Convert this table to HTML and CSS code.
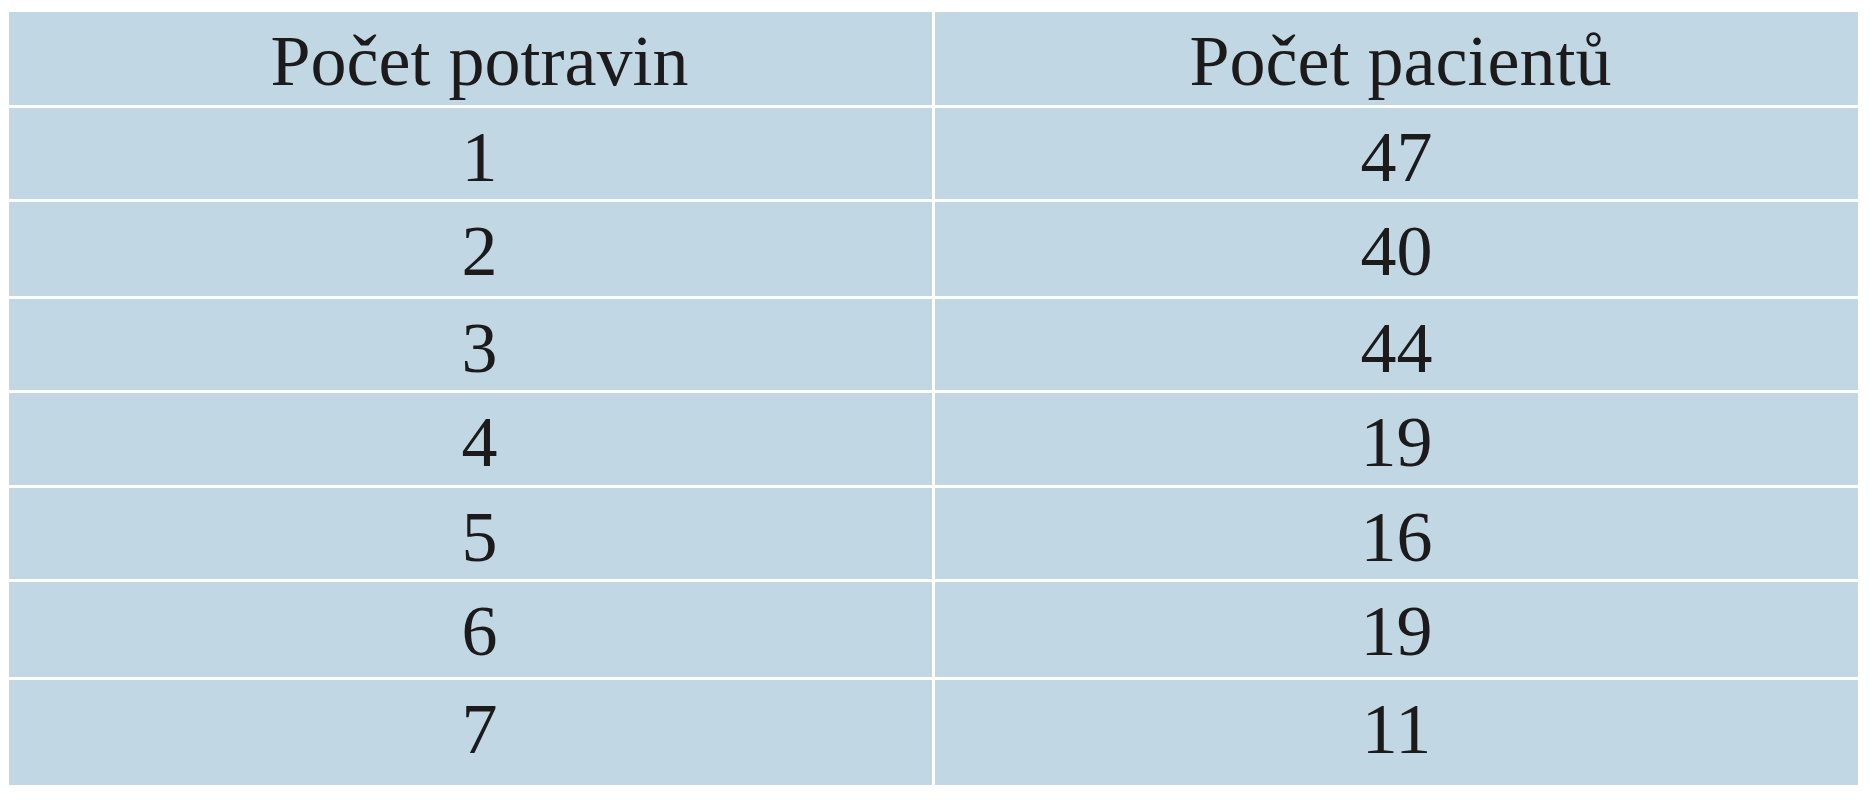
FILE: index.html
```html
<!DOCTYPE html>
<html lang="cs">
<head>
<meta charset="utf-8">
<title>Počet potravin</title>
<link rel="stylesheet" href="styles.css">
</head>
<body>
<div class="table">
  <div class="cell left head">Počet potravin</div>
  <div class="cell right head">Počet pacientů</div>
  <div class="cell left">1</div>
  <div class="cell right">47</div>
  <div class="cell left">2</div>
  <div class="cell right">40</div>
  <div class="cell left">3</div>
  <div class="cell right">44</div>
  <div class="cell left">4</div>
  <div class="cell right">19</div>
  <div class="cell left">5</div>
  <div class="cell right">16</div>
  <div class="cell left">6</div>
  <div class="cell right">19</div>
  <div class="cell left">7</div>
  <div class="cell right">11</div>
</div>
</body>
</html>
```

FILE: styles.css
```css
html, body {
  margin: 0;
  padding: 0;
  background: #ffffff;
}

body {
  padding: 12px 12px 0 9px;
  width: 1849px;
}

.table {
  display: grid;
  grid-template-columns: 923px 923px;
  grid-template-rows: 93px 91px 94px 91px 92px 91px 95px 105px;
  column-gap: 3px;
  row-gap: 3px;
  width: 1849px;
}

.cell {
  background: #c1d7e3;
  color: #1c1a1b;
  font-family: "Liberation Serif", "Times New Roman", serif;
  font-size: 72px;
  line-height: 72px;
  padding-top: 13px;
  box-sizing: border-box;
  text-align: center;
  white-space: nowrap;
}

.left {
  padding-left: 18px;
}

.head.right {
  padding-left: 8px;
}
```
